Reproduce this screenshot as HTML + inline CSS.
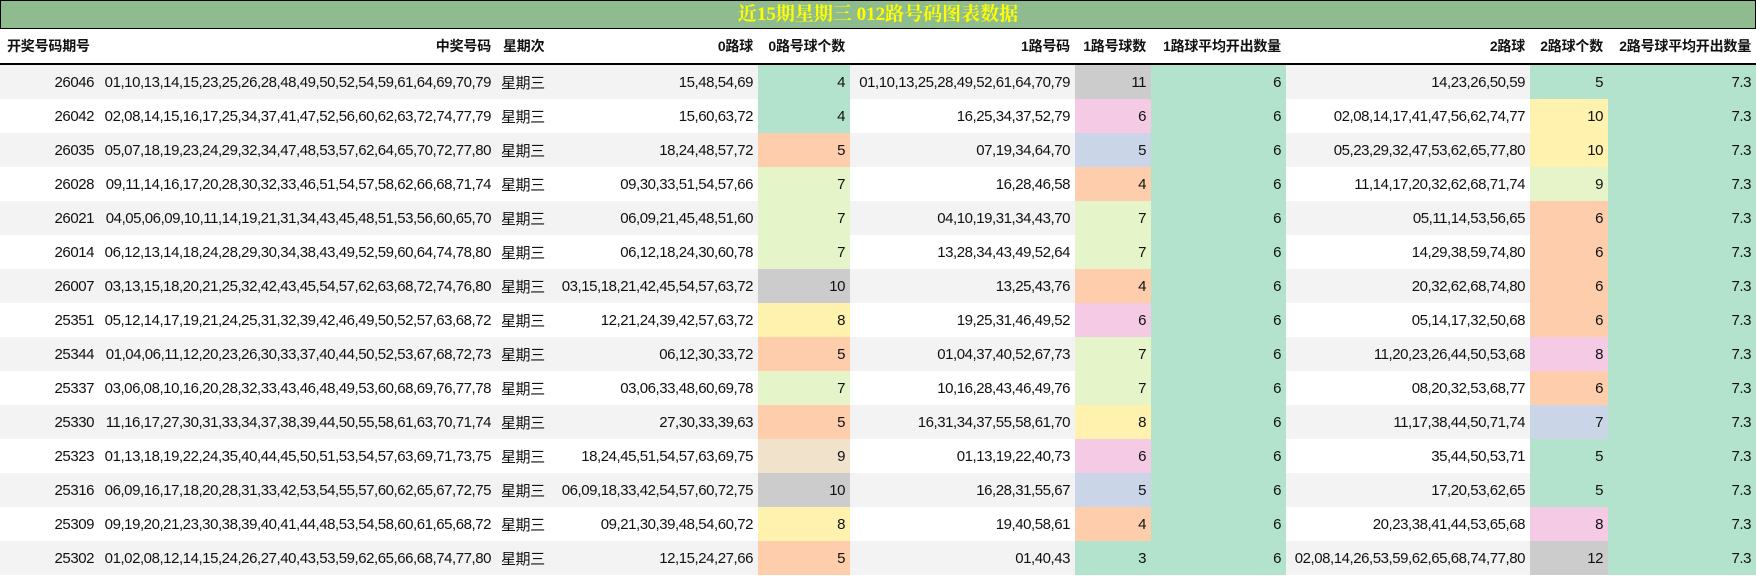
<!DOCTYPE html>
<html><head><meta charset="utf-8"><style>
html,body{margin:0;padding:0;background:#fff;width:1756px;height:576px;overflow:hidden}
.t{position:absolute;left:0;top:0;width:1754px;height:27px;background:#8fbc8f;border:1px solid #000;color:#ffff00;font:bold 19px "Liberation Serif","Noto Serif CJK SC",serif;text-align:center;line-height:27px}
table{position:absolute;left:0;top:29px;border-collapse:collapse;table-layout:fixed;width:1756px;font-family:"Liberation Sans","Noto Sans CJK SC",sans-serif;font-size:15px;letter-spacing:-0.45px;color:#111}
th{height:34px;font-weight:bold;text-align:right;padding:0 5px;border-bottom:2px solid #000;white-space:nowrap;font-size:14px;letter-spacing:-0.2px}
th.l{text-align:left;padding-left:7px}
td{height:34px;padding:0 5px;text-align:right;white-space:nowrap}
tr.a td{background:#f3f3f3}
tr.b td{background:#fff}
td.w{text-align:left}
tr td.g{background:#b3e2cd}tr td.y{background:#cccccc}tr td.p{background:#f4cae4}tr td.u{background:#cbd5e8}tr td.o{background:#fdcdac}tr td.L{background:#e6f5c9}tr td.Y{background:#fff2ae}tr td.e{background:#f1e2cc}
</style></head><body>
<div class="t">近15期星期三 012路号码图表数据</div>
<table>
<colgroup><col style="width:99px"><col style="width:397px"><col style="width:58px"><col style="width:204px"><col style="width:92px"><col style="width:225px"><col style="width:76px"><col style="width:135px"><col style="width:244px"><col style="width:78px"><col style="width:148px"></colgroup>
<tr><th class="l">开奖号码期号</th><th>中奖号码</th><th class="l">星期次</th><th>0路球</th><th>0路号球个数</th><th>1路号码</th><th>1路号球数</th><th>1路球平均开出数量</th><th>2路球</th><th>2路球个数</th><th>2路号球平均开出数量</th></tr>
<tr class="a"><td>26046</td><td>01,10,13,14,15,23,25,26,28,48,49,50,52,54,59,61,64,69,70,79</td><td class="w">星期三</td><td>15,48,54,69</td><td class="g">4</td><td>01,10,13,25,28,49,52,61,64,70,79</td><td class="y">11</td><td class="g">6</td><td>14,23,26,50,59</td><td class="g">5</td><td class="g">7.3</td></tr>
<tr class="b"><td>26042</td><td>02,08,14,15,16,17,25,34,37,41,47,52,56,60,62,63,72,74,77,79</td><td class="w">星期三</td><td>15,60,63,72</td><td class="g">4</td><td>16,25,34,37,52,79</td><td class="p">6</td><td class="g">6</td><td>02,08,14,17,41,47,56,62,74,77</td><td class="Y">10</td><td class="g">7.3</td></tr>
<tr class="a"><td>26035</td><td>05,07,18,19,23,24,29,32,34,47,48,53,57,62,64,65,70,72,77,80</td><td class="w">星期三</td><td>18,24,48,57,72</td><td class="o">5</td><td>07,19,34,64,70</td><td class="u">5</td><td class="g">6</td><td>05,23,29,32,47,53,62,65,77,80</td><td class="Y">10</td><td class="g">7.3</td></tr>
<tr class="b"><td>26028</td><td>09,11,14,16,17,20,28,30,32,33,46,51,54,57,58,62,66,68,71,74</td><td class="w">星期三</td><td>09,30,33,51,54,57,66</td><td class="L">7</td><td>16,28,46,58</td><td class="o">4</td><td class="g">6</td><td>11,14,17,20,32,62,68,71,74</td><td class="L">9</td><td class="g">7.3</td></tr>
<tr class="a"><td>26021</td><td>04,05,06,09,10,11,14,19,21,31,34,43,45,48,51,53,56,60,65,70</td><td class="w">星期三</td><td>06,09,21,45,48,51,60</td><td class="L">7</td><td>04,10,19,31,34,43,70</td><td class="L">7</td><td class="g">6</td><td>05,11,14,53,56,65</td><td class="o">6</td><td class="g">7.3</td></tr>
<tr class="b"><td>26014</td><td>06,12,13,14,18,24,28,29,30,34,38,43,49,52,59,60,64,74,78,80</td><td class="w">星期三</td><td>06,12,18,24,30,60,78</td><td class="L">7</td><td>13,28,34,43,49,52,64</td><td class="L">7</td><td class="g">6</td><td>14,29,38,59,74,80</td><td class="o">6</td><td class="g">7.3</td></tr>
<tr class="a"><td>26007</td><td>03,13,15,18,20,21,25,32,42,43,45,54,57,62,63,68,72,74,76,80</td><td class="w">星期三</td><td>03,15,18,21,42,45,54,57,63,72</td><td class="y">10</td><td>13,25,43,76</td><td class="o">4</td><td class="g">6</td><td>20,32,62,68,74,80</td><td class="o">6</td><td class="g">7.3</td></tr>
<tr class="b"><td>25351</td><td>05,12,14,17,19,21,24,25,31,32,39,42,46,49,50,52,57,63,68,72</td><td class="w">星期三</td><td>12,21,24,39,42,57,63,72</td><td class="Y">8</td><td>19,25,31,46,49,52</td><td class="p">6</td><td class="g">6</td><td>05,14,17,32,50,68</td><td class="o">6</td><td class="g">7.3</td></tr>
<tr class="a"><td>25344</td><td>01,04,06,11,12,20,23,26,30,33,37,40,44,50,52,53,67,68,72,73</td><td class="w">星期三</td><td>06,12,30,33,72</td><td class="o">5</td><td>01,04,37,40,52,67,73</td><td class="L">7</td><td class="g">6</td><td>11,20,23,26,44,50,53,68</td><td class="p">8</td><td class="g">7.3</td></tr>
<tr class="b"><td>25337</td><td>03,06,08,10,16,20,28,32,33,43,46,48,49,53,60,68,69,76,77,78</td><td class="w">星期三</td><td>03,06,33,48,60,69,78</td><td class="L">7</td><td>10,16,28,43,46,49,76</td><td class="L">7</td><td class="g">6</td><td>08,20,32,53,68,77</td><td class="o">6</td><td class="g">7.3</td></tr>
<tr class="a"><td>25330</td><td>11,16,17,27,30,31,33,34,37,38,39,44,50,55,58,61,63,70,71,74</td><td class="w">星期三</td><td>27,30,33,39,63</td><td class="o">5</td><td>16,31,34,37,55,58,61,70</td><td class="Y">8</td><td class="g">6</td><td>11,17,38,44,50,71,74</td><td class="u">7</td><td class="g">7.3</td></tr>
<tr class="b"><td>25323</td><td>01,13,18,19,22,24,35,40,44,45,50,51,53,54,57,63,69,71,73,75</td><td class="w">星期三</td><td>18,24,45,51,54,57,63,69,75</td><td class="e">9</td><td>01,13,19,22,40,73</td><td class="p">6</td><td class="g">6</td><td>35,44,50,53,71</td><td class="g">5</td><td class="g">7.3</td></tr>
<tr class="a"><td>25316</td><td>06,09,16,17,18,20,28,31,33,42,53,54,55,57,60,62,65,67,72,75</td><td class="w">星期三</td><td>06,09,18,33,42,54,57,60,72,75</td><td class="y">10</td><td>16,28,31,55,67</td><td class="u">5</td><td class="g">6</td><td>17,20,53,62,65</td><td class="g">5</td><td class="g">7.3</td></tr>
<tr class="b"><td>25309</td><td>09,19,20,21,23,30,38,39,40,41,44,48,53,54,58,60,61,65,68,72</td><td class="w">星期三</td><td>09,21,30,39,48,54,60,72</td><td class="Y">8</td><td>19,40,58,61</td><td class="o">4</td><td class="g">6</td><td>20,23,38,41,44,53,65,68</td><td class="p">8</td><td class="g">7.3</td></tr>
<tr class="a"><td>25302</td><td>01,02,08,12,14,15,24,26,27,40,43,53,59,62,65,66,68,74,77,80</td><td class="w">星期三</td><td>12,15,24,27,66</td><td class="o">5</td><td>01,40,43</td><td class="g">3</td><td class="g">6</td><td>02,08,14,26,53,59,62,65,68,74,77,80</td><td class="y">12</td><td class="g">7.3</td></tr>
</table>
</body></html>
